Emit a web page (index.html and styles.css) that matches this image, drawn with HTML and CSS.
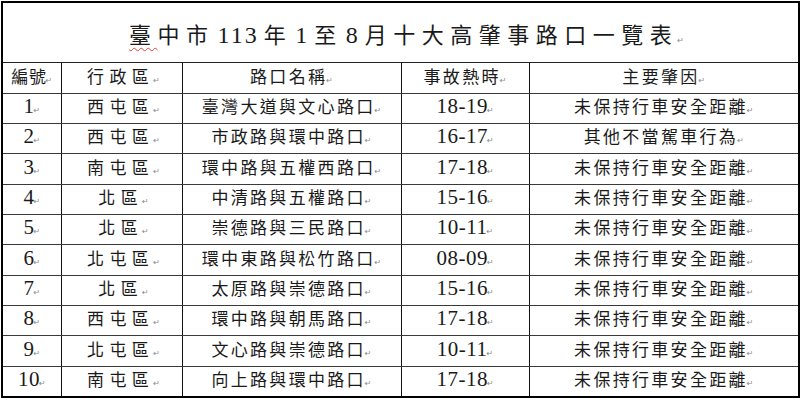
FILE: index.html
```html
<!DOCTYPE html>
<html lang="zh-Hant">
<head>
<meta charset="utf-8">
<title>臺中市113年1至8月十大高肇事路口一覽表</title>
<link rel="stylesheet" href="styles.css">
</head>
<body>
<table class="tbl">
  <colgroup>
    <col class="c1"><col class="c2"><col class="c3"><col class="c4"><col class="c5">
  </colgroup>
  <tr class="title-row">
    <td colspan="5" class="title"><span class="wavy">臺</span>中市<span class="tn">113</span>年<span class="tn">1</span>至<span class="tn">8</span>月十大高肇事路口一覽表<span class="pm">↵</span></td>
  </tr>
  <tr class="head">
    <td class="k1">編號<span class="pm">↵</span></td>
    <td class="k2">行政區<span class="pm">↵</span></td>
    <td>路口名稱<span class="pm">↵</span></td>
    <td>事故熱時<span class="pm">↵</span></td>
    <td>主要肇因<span class="pm">↵</span></td>
  </tr>
  <tr><td class="num">1<span class="pm">↵</span></td><td class="k2">西屯區<span class="pm">↵</span></td><td>臺灣大道與文心路口<span class="pm">↵</span></td><td class="num">18-19<span class="pm">↵</span></td><td>未保持行車安全距離<span class="pm">↵</span></td></tr>
  <tr><td class="num">2<span class="pm">↵</span></td><td class="k2">西屯區<span class="pm">↵</span></td><td>市政路與環中路口<span class="pm">↵</span></td><td class="num">16-17<span class="pm">↵</span></td><td>其他不當駕車行為<span class="pm">↵</span></td></tr>
  <tr><td class="num">3<span class="pm">↵</span></td><td class="k2">南屯區<span class="pm">↵</span></td><td>環中路與五權西路口<span class="pm">↵</span></td><td class="num">17-18<span class="pm">↵</span></td><td>未保持行車安全距離<span class="pm">↵</span></td></tr>
  <tr><td class="num">4<span class="pm">↵</span></td><td class="k2">北區<span class="pm">↵</span></td><td>中清路與五權路口<span class="pm">↵</span></td><td class="num">15-16<span class="pm">↵</span></td><td>未保持行車安全距離<span class="pm">↵</span></td></tr>
  <tr><td class="num">5<span class="pm">↵</span></td><td class="k2">北區<span class="pm">↵</span></td><td>崇德路與三民路口<span class="pm">↵</span></td><td class="num">10-11<span class="pm">↵</span></td><td>未保持行車安全距離<span class="pm">↵</span></td></tr>
  <tr><td class="num">6<span class="pm">↵</span></td><td class="k2">北屯區<span class="pm">↵</span></td><td>環中東路與松竹路口<span class="pm">↵</span></td><td class="num">08-09<span class="pm">↵</span></td><td>未保持行車安全距離<span class="pm">↵</span></td></tr>
  <tr><td class="num">7<span class="pm">↵</span></td><td class="k2">北區<span class="pm">↵</span></td><td>太原路與崇德路口<span class="pm">↵</span></td><td class="num">15-16<span class="pm">↵</span></td><td>未保持行車安全距離<span class="pm">↵</span></td></tr>
  <tr><td class="num">8<span class="pm">↵</span></td><td class="k2">西屯區<span class="pm">↵</span></td><td>環中路與朝馬路口<span class="pm">↵</span></td><td class="num">17-18<span class="pm">↵</span></td><td>未保持行車安全距離<span class="pm">↵</span></td></tr>
  <tr><td class="num">9<span class="pm">↵</span></td><td class="k2">北屯區<span class="pm">↵</span></td><td>文心路與崇德路口<span class="pm">↵</span></td><td class="num">10-11<span class="pm">↵</span></td><td>未保持行車安全距離<span class="pm">↵</span></td></tr>
  <tr><td class="num">10<span class="pm">↵</span></td><td class="k2">南屯區<span class="pm">↵</span></td><td>向上路與環中路口<span class="pm">↵</span></td><td class="num">17-18<span class="pm">↵</span></td><td>未保持行車安全距離<span class="pm">↵</span></td></tr>
</table>
</body>
</html>
```

FILE: styles.css
```css
html, body {
  margin: 0;
  padding: 0;
  background: #fff;
}

body {
  padding: 1px 0 0 1px;
  font-family: "Noto Sans CJK TC", "Noto Sans CJK SC", sans-serif;
  color: #1a1a1a;
}

.tbl {
  border-collapse: collapse;
  table-layout: fixed;
  width: 797px;
  border: 2px solid #000;
}

.c1 { width: 59px; }
.c2 { width: 121px; }
.c3 { width: 219px; }
.c4 { width: 128px; }
.c5 { width: 270px; }

.tbl td {
  border: 1px solid #3a3a3a;
  border-left-color: #111;
  border-right-color: #111;
  padding: 0;
  height: 29px;
  text-align: center;
  vertical-align: middle;
  font-size: 17px;
  line-height: 20px;
  letter-spacing: 2.3px;
  white-space: nowrap;
}

.tbl tr:nth-child(3n+5) td {
  height: 30px;
}

.tbl tr.title-row td {
  height: 51px;
  border-bottom-color: #222;
}

.tbl tr.head td {
  height: 30px;
}

.tbl td.title {
  font-size: 22px;
  letter-spacing: 6.5px;
  padding-top: 8px;
  padding-left: 12px;
  line-height: 28px;
}

.wavy {
  text-decoration: underline wavy #e0403a;
  text-decoration-thickness: 1px;
  text-underline-offset: 4px;
}

.tn {
  font-family: "Liberation Serif", "Times New Roman", serif;
  font-size: 24px;
  letter-spacing: 2px;
  margin: 0 5px 0 3px;
}

.tbl td.k1 { letter-spacing: 0.7px; }
.tbl td.k2 { letter-spacing: 5.4px; padding-left: 4px; }

.tbl td.num {
  font-family: "Liberation Serif", "Times New Roman", serif;
  font-size: 21px;
  letter-spacing: 0.5px;
}

.pm {
  font-family: "DejaVu Sans", sans-serif;
  font-size: 8px;
  letter-spacing: 0;
  color: #8a8a8a;
  margin-left: -1px;
}
```
